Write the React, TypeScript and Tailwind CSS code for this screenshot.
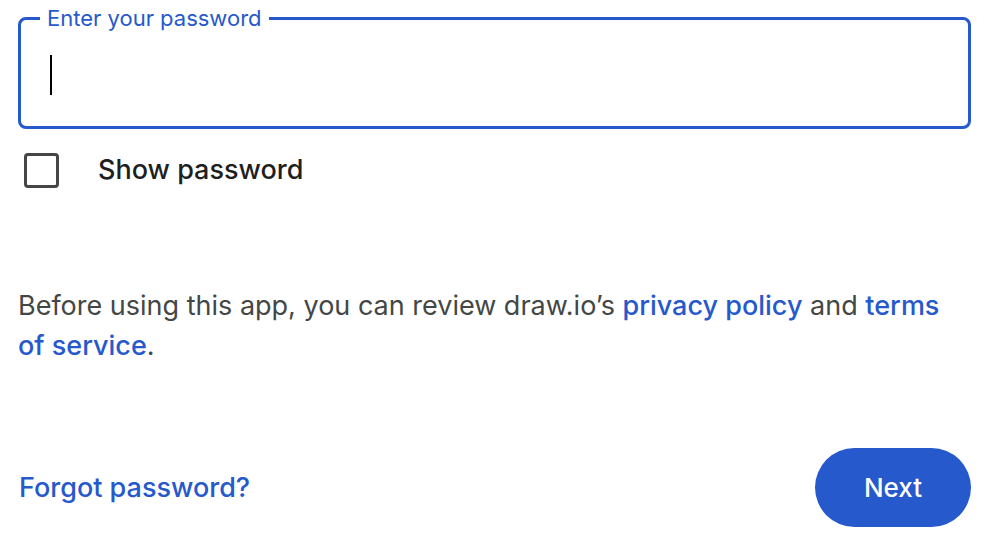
export default function App() {
  return (
    <div
      className="w-[988px] h-[542px] bg-white pl-[18px] pr-[17px] pt-[17px] overflow-hidden"
      style={{ fontFamily: "Inter, Roboto, 'Liberation Sans', sans-serif" }}
    >
      {/* Password field */}
      <div className="relative h-[112px] rounded-[8px] border-[3px] border-[#2659cc]">
        <span className="absolute -top-[16px] left-[19px] bg-white px-[7px] text-[22px] leading-[28px] text-[#2659cc]">
          Enter your password
        </span>
        <div className="absolute left-[29px] top-[35px] w-[2px] h-[40px] bg-black" />
      </div>

      {/* Show password */}
      <div className="mt-[21px] flex items-center">
        <div className="ml-[6px] w-[35px] h-[35px] rounded-[4px] border-[3px] border-[#444746]" />
        <span className="ml-[39px] text-[27px] font-medium text-[#1f1f1f]">Show password</span>
      </div>

      {/* Notice */}
      <p className="mt-[95px] text-[27px] leading-[40px] text-[#444746]">
        Before using this app, you can review draw.io’s{" "}
        <a className="font-medium text-[#2659cc]">privacy policy</a> and{" "}
        <a className="font-medium text-[#2659cc]">terms of service</a>.
      </p>

      {/* Actions */}
      <div className="mt-[82px] flex items-center justify-between">
        <a className="ml-[1px] mt-[3px] text-[27px] font-medium text-[#2659cc]">Forgot password?</a>
        <button className="w-[156px] h-[79px] rounded-full bg-[#2659cc] text-white text-[26px] font-medium">
          Next
        </button>
      </div>
    </div>
  );
}
